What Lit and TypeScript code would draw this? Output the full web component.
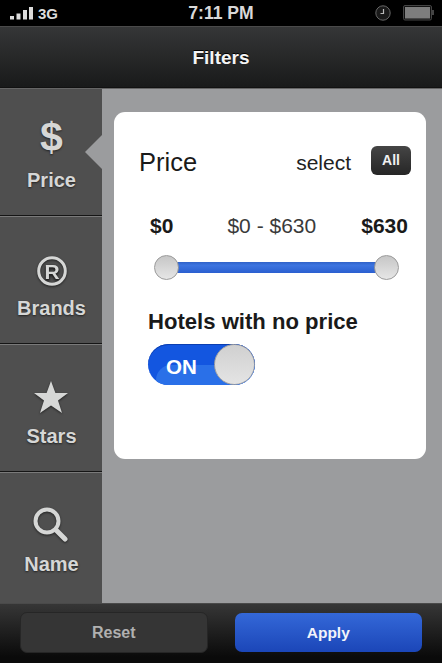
import { LitElement, html, css } from "lit";
import { customElement } from "lit/decorators.js";

@customElement("app-root")
export class AppRoot extends LitElement {
  static styles = css`
    :host { display: block; width: 442px; height: 663px; overflow: hidden; font-family: "Liberation Sans", Arial, sans-serif; background: #000; }
    .page { display: flex; flex-direction: column; height: 663px; }
    .status { height: 26px; flex: none; background: #000; display: grid; grid-template-columns: 1fr auto 1fr; align-items: center; color: #dcdcdc; font-weight: 700; padding: 0 10px; box-sizing: border-box; }
    .sl { display: flex; align-items: center; gap: 5px; font-size: 15px; }
    .bars { display: block; }
    .time { font-size: 17.6px; color: #d8d8d8; padding-top: 1px; }
    .sr { display: flex; justify-content: flex-end; align-items: center; gap: 12px; margin-right: -2px; }
    .nav { height: 62px; flex: none; border-top: 1px solid #4a4a4a; box-sizing: border-box; background: linear-gradient(#353637, #191a1a); display: flex; align-items: center; justify-content: center; color: #f4f4f4; font-weight: 700; font-size: 19px; padding-top: 2px; text-shadow: 0 -1px 0 #000; border-bottom: 1px solid #111; }
    .main { flex: 1; display: flex; min-height: 0; background: #9b9c9e; border-top: 1px solid #666; }
    .side { width: 102px; flex: none; display: flex; flex-direction: column; background: #4f4f4f; }
    .item { height: 128px; flex: none; box-sizing: border-box; position: relative; display: flex; flex-direction: column; align-items: center; padding-left: 1px; color: #d6d7d6; font-weight: 700; font-size: 20px; text-shadow: 0 1px 2px #222; border-bottom: 1px solid #151515; }
    .item + .item { border-top: 1px solid #7a7a7a; }
    .item.first { height: 127px; }
    .item.last { flex: 1; border-bottom: none; }
    .ico { height: 69px; display: flex; align-items: flex-end; justify-content: center; flex: none; }
    .dollar { font-size: 41px; line-height: 41px; text-shadow: 0 1px 2px #222; }
    .ico svg { display: block; filter: drop-shadow(0 1px 1px #222); }
    .ico svg.shift { margin-right: 2px; }
    .ico svg.shift2 { margin-right: 4px; }
    .lbl { margin-top: 10px; line-height: 24px; }
    .notch { position: absolute; right: 0; top: 46px; width: 17px; height: 34px; background: #9b9c9e; clip-path: polygon(100% 0, 0 50%, 100% 100%); }
    .content { flex: 1; padding: 23px 16px 0 12px; }
    .card { height: 347px; background: #fff; border-radius: 11px; box-sizing: border-box; padding: 33px 15px 0 25px; color: #1a1a1a; }
    .head { display: flex; align-items: center; height: 30px; }
    .title { font-size: 25.5px; flex: 1; padding-top: 5px; }
    .sel { font-size: 21px; margin-right: 20px; padding-top: 5px; color: #222; }
    .all { width: 40px; height: 29px; border-radius: 6px; background: linear-gradient(#454545, #262626); color: #f0f0f0; font-weight: 700; font-size: 14px; display: flex; align-items: center; justify-content: center; }
    .range { display: flex; justify-content: space-between; align-items: center; margin: 38px 3px 0 11px; height: 26px; font-size: 21px; }
    .range b { font-weight: 700; }
    .mid { color: #3a3a3a; font-size: 21px; margin-left: 9px; }
    .slider { position: relative; height: 25px; margin: 16px 12px 0 15px; display: flex; align-items: center; }
    .track { flex: 1; height: 11px; background: linear-gradient(#2f62c8, #3c74e0 30%, #2a5fd0); margin: 0 10px; }
    .knob { position: absolute; top: 0; width: 25px; height: 25px; box-sizing: border-box; border-radius: 50%; border: 1px solid #9a9a9a; background: linear-gradient(#c6c6c6, #e6e6e6); }
    .knob.l { left: 0; }
    .knob.r { right: 0; }
    .hn { font-size: 22.1px; font-weight: 700; margin: 29px 0 0 9px; line-height: 26px; }
    .sw { position: relative; width: 107px; height: 41px; margin: 9px 0 0 9px; border-radius: 21px; overflow: hidden; background: #1356e0; box-shadow: inset 0 1px 0 #0c3fb0; }
    .sw::before { content: ""; position: absolute; left: 8px; top: 21px; width: 110px; height: 30px; border-radius: 15px 0 0 0; background: #2a70e8; }
    .on { position: absolute; left: 18px; top: 0; line-height: 45px; color: #fff; font-weight: 700; font-size: 20.5px; }
    .thumb { position: absolute; right: 0; top: 0; width: 41px; height: 41px; box-sizing: border-box; border-radius: 50%; border: 1px solid #a0a0a0; background: linear-gradient(#d0d0d0, #e4e4e4); }
    .foot { height: 60px; flex: none; border-top: 1px solid #4a4a4a; box-sizing: border-box; background: linear-gradient(#363636, #0a0a0a 90%); display: flex; gap: 27px; padding: 9px 20px 0 20px; }
    .btn { width: 188px; height: 39px; box-sizing: border-box; border-radius: 7px; display: flex; align-items: center; justify-content: center; font-weight: 700; font-size: 16px; }
    .reset { background: #353535; border: 1px solid #262626; color: #b0b0b0; height: 41px; margin-top: -1px; }
    .apply { background: linear-gradient(#3468d8, #1b46b8); color: #f2f4fa; font-size: 15.5px; }
  `;

  render() {
    return html`
      <div class="page">
        <div class="status">
          <div class="sl">
            <svg class="bars" width="23" height="14" viewBox="0 0 23 14" fill="#dcdcdc">
              <rect x="0" y="10" width="4" height="3.5"/><rect x="6.5" y="7.5" width="4" height="6"/><rect x="13" y="4" width="4" height="9.5"/><rect x="19" y="1" width="4" height="12.5"/>
            </svg>
            <span>3G</span>
          </div>
          <div class="time">7:11 PM</div>
          <div class="sr">
            <svg width="16" height="16" viewBox="0 0 16 16" fill="none">
              <circle cx="8" cy="8" r="7.2" stroke="#666" fill="#1a1a1a"/><path d="M8.5 4v4.5H5.5" stroke-width="1.2" stroke="#bbb"/>
            </svg>
            <svg width="31" height="16" viewBox="0 0 31 16">
              <rect x="0.5" y="0.5" width="28" height="14.5" rx="1.5" fill="#111" stroke="#444"/>
              <rect x="2" y="2" width="25" height="11.5" fill="#7d7d7d"/>
              <rect x="29" y="5" width="2" height="5" fill="#444"/>
            </svg>
          </div>
        </div>
        <div class="nav">Filters</div>
        <div class="main">
          <div class="side">
            <div class="item first">
              <div class="ico"><span class="dollar">$</span></div>
              <div class="lbl">Price</div>
              <div class="notch"></div>
            </div>
            <div class="item">
              <div class="ico">
                <svg width="30" height="30" viewBox="0 0 30 30">
                  <circle cx="15" cy="15" r="13.3" fill="none" stroke="#d6d7d6" stroke-width="3"/>
                  <text x="15" y="22.5" text-anchor="middle" font-family="Liberation Sans" font-weight="700" font-size="21" fill="#d6d7d6">R</text>
                </svg>
              </div>
              <div class="lbl">Brands</div>
            </div>
            <div class="item">
              <div class="ico">
                <svg class="shift" width="36" height="34" viewBox="0 0 36 34"><polygon fill="#d6d7d6" points="18,1 22.4,13 35,13 25,20.5 29,33 18,25.5 7,33 11,20.5 1,13 13.6,13"/></svg>
              </div>
              <div class="lbl">Stars</div>
            </div>
            <div class="item last">
              <div class="ico">
                <svg class="shift2" width="36" height="36" viewBox="0 0 36 36" fill="none" stroke="#d6d7d6">
                  <circle cx="15" cy="15" r="11.5" stroke-width="4"/>
                  <path d="M24 24 L33 33" stroke-width="5" stroke-linecap="round"/>
                </svg>
              </div>
              <div class="lbl">Name</div>
            </div>
          </div>
          <div class="content">
            <div class="card">
              <div class="head">
                <div class="title">Price</div>
                <div class="sel">select</div>
                <div class="all">All</div>
              </div>
              <div class="range"><b>$0</b><span class="mid">$0 - $630</span><b>$630</b></div>
              <div class="slider">
                <div class="track"></div>
                <div class="knob l"></div>
                <div class="knob r"></div>
              </div>
              <div class="hn">Hotels with no price</div>
              <div class="sw"><span class="on">ON</span><div class="thumb"></div></div>
            </div>
          </div>
        </div>
        <div class="foot">
          <div class="btn reset">Reset</div>
          <div class="btn apply">Apply</div>
        </div>
      </div>
    `;
  }
}
